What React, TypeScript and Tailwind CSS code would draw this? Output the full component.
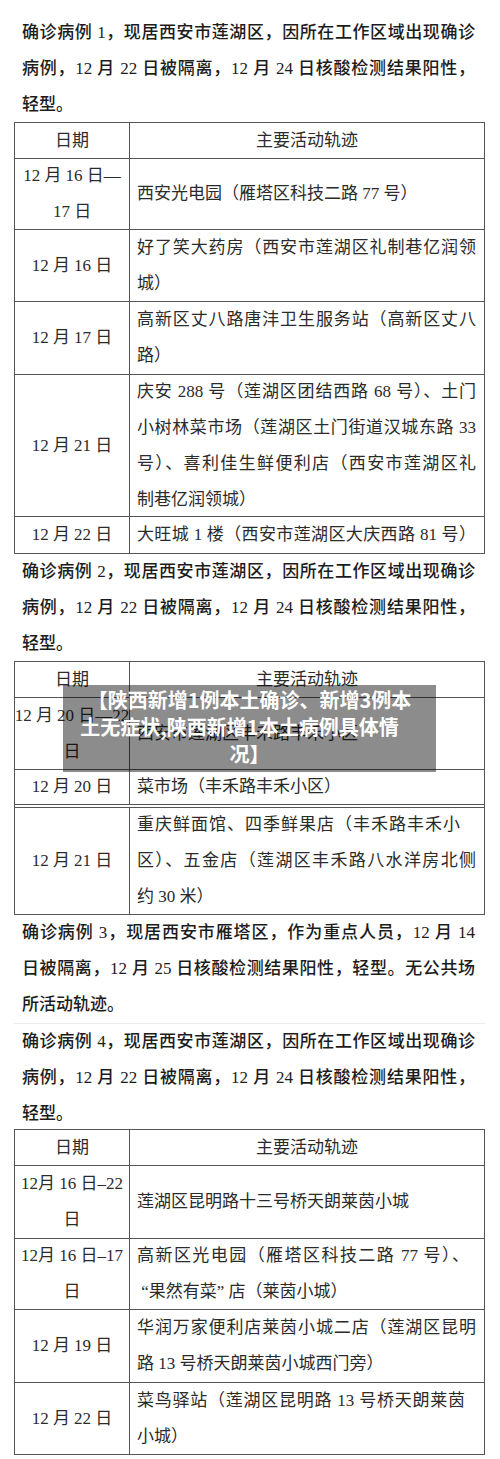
import React from "react";

type L = string | { t: string; j?: boolean; w?: number };

const Line = ({ l }: { l: L }) => {
  if (typeof l === "string") return <div className="whitespace-pre">{l}</div>;
  return (
    <div
      className={l.j ? "text-justify [text-align-last:justify]" : "whitespace-pre"}
      style={l.w ? { width: l.w } : undefined}
    >
      {l.t}
    </div>
  );
};

type Row = { h: number; d: string[]; c: L[]; dbl?: boolean };

const Para = ({ lines, h, pt = 0, sep = false }: { lines: L[]; h: number; pt?: number; sep?: boolean }) => (
  <div
    className={
      "ml-[14px] w-[471px] pl-[8px] pr-[10px] text-[17px] leading-[36px] font-medium text-[#1c1c1c] " +
      (sep ? "border-b border-[#ececec]" : "")
    }
    style={{ height: h, paddingTop: pt }}
  >
    {lines.map((l, i) => (
      <Line key={i} l={l} />
    ))}
  </div>
);

const Table = ({ rows }: { rows: Row[] }) => (
  <div className="ml-[14px] w-[471px] border-x border-t border-[#555] text-[17px] leading-[36px] text-[#2b2b2b]">
    <div className="flex h-[36px] border-b border-[#555]">
      <div className="w-[115px] shrink-0 border-r border-[#555] flex items-center justify-center">日期</div>
      <div className="flex-1 flex items-center justify-center">主要活动轨迹</div>
    </div>
    {rows.map((r, i) => (
      <div
        key={i}
        className={
          "flex " +
          (r.dbl ? "border-b-[4px] border-double border-[#555]" : "border-b border-[#555]")
        }
        style={{ height: r.h }}
      >
        <div className="w-[115px] shrink-0 border-r border-[#555] flex flex-col items-center justify-center text-center">
          {r.d.map((t, k) => (
            <div key={k} className="whitespace-pre">
              {t}
            </div>
          ))}
        </div>
        <div className="flex-1 pl-[7px] pr-[8px] flex flex-col justify-center">
          {r.c.map((l, k) => (
            <Line key={k} l={l} />
          ))}
        </div>
      </div>
    ))}
  </div>
);

const caseLines = (n: string): L[] => [
  { t: `确诊病例 ${n}，现居西安市莲湖区，因所在工作区域出现确诊`, j: true },
  { t: "病例，12 月 22 日被隔离，12 月 24 日核酸检测结果阳性，", j: true },
  "轻型。",
];

const t1: Row[] = [
  { h: 71, d: ["12 月 16 日—", "17 日"], c: ["西安光电园（雁塔区科技二路 77 号）"] },
  { h: 72, d: ["12 月 16 日"], c: [{ t: "好了笑大药房（西安市莲湖区礼制巷亿润领", j: true }, "城）"] },
  { h: 73, d: ["12 月 17 日"], c: [{ t: "高新区丈八路唐沣卫生服务站（高新区丈八", j: true }, "路）"] },
  {
    h: 142,
    d: ["12 月 21 日"],
    c: [
      { t: "庆安 288 号（莲湖区团结西路 68 号）、土门", j: true },
      { t: "小树林菜市场（莲湖区土门街道汉城东路 33", j: true },
      { t: "号）、喜利佳生鲜便利店（西安市莲湖区礼", j: true },
      "制巷亿润领城）",
    ],
  },
  { h: 37, d: ["12 月 22 日"], c: [{ t: "大旺城 1 楼（西安市莲湖区大庆西路 81 号）", j: true }] },
];

const t2: Row[] = [
  { h: 72, d: ["12 月 20 日—22", "日"], c: ["西安市莲湖区丰禾路丰禾小区"] },
  { h: 38, d: ["12 月 20 日"], c: ["菜市场（丰禾路丰禾小区）"], dbl: true },
  {
    h: 107,
    d: ["12 月 21 日"],
    c: [
      { t: "重庆鲜面馆、四季鲜果店（丰禾路丰禾小", j: true, w: 323 },
      { t: "区）、五金店（莲湖区丰禾路八水洋房北侧", j: true },
      "约 30 米）",
    ],
  },
];

const t3: Row[] = [
  { h: 73, d: ["12月 16 日–22", "日"], c: ["莲湖区昆明路十三号桥天朗莱茵小城"] },
  {
    h: 71,
    d: ["12月 16 日–17", "日"],
    c: [{ t: "高新区光电园（雁塔区科技二路 77 号）、", j: true, w: 332 }, " “果然有菜” 店（莱茵小城）"],
  },
  {
    h: 73,
    d: ["12 月 19 日"],
    c: [{ t: "华润万家便利店莱茵小城二店（莲湖区昆明", j: true }, "路 13 号桥天朗莱茵小城西门旁）"],
  },
  {
    h: 72,
    d: ["12 月 22 日"],
    c: [{ t: "菜鸟驿站（莲湖区昆明路 13 号桥天朗莱茵", j: true, w: 328 }, "小城）"],
  },
];

export default function App() {
  return (
    <div className="relative w-[500px] h-[1459px] bg-white overflow-hidden font-['Liberation_Serif','Noto_Sans_CJK_SC',serif]">
      <Para lines={caseLines("1")} h={122} pt={15} />
      <Table rows={t1} />
      <Para lines={caseLines("2")} h={107} />
      <Table rows={t2} />
      <Para
        lines={[
          { t: "确诊病例 3，现居西安市雁塔区，作为重点人员，12 月 14", j: true },
          { t: "日被隔离，12 月 25 日核酸检测结果阳性，轻型。无公共场", j: true },
          "所活动轨迹。",
        ]}
        h={109}
        sep
      />
      <Para lines={caseLines("4")} h={105} />
      <Table rows={t3} />

      <div className="absolute left-[63px] top-[685px] w-[373px] h-[87px] bg-black/45 pt-[1px] text-center text-white font-bold text-[20px] leading-[27px] font-['Noto_Sans_CJK_SC',sans-serif]">
        <div className="whitespace-nowrap">【陕西新增1例本土确诊、新增3例本</div>
        <div className="whitespace-nowrap pr-[20px]">土无症状,陕西新增1本土病例具体情</div>
        <div className="whitespace-nowrap">况】</div>
      </div>
    </div>
  );
}
